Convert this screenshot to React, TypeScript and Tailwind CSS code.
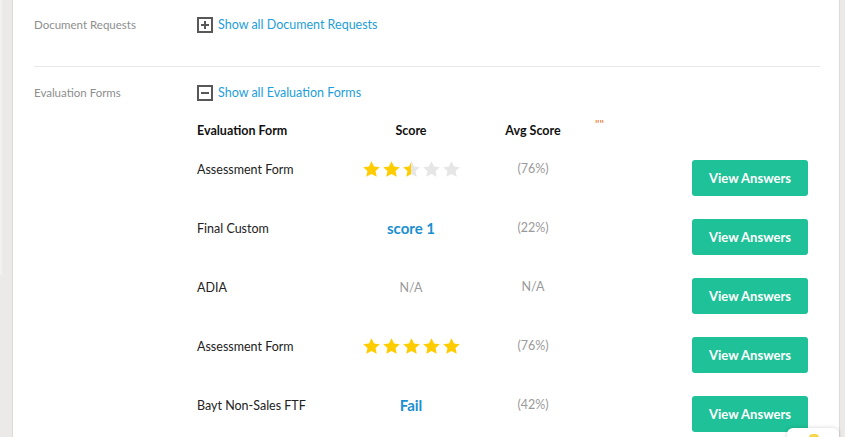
import React from "react";

type Row = {
  form: string;
  score: { kind: "stars"; value: number } | { kind: "text"; text: string } | { kind: "na" };
  avg: string;
};

const rows: Row[] = [
  { form: "Assessment Form", score: { kind: "stars", value: 2.5 }, avg: "(76%)" },
  { form: "Final Custom", score: { kind: "text", text: "score 1" }, avg: "(22%)" },
  { form: "ADIA", score: { kind: "na" }, avg: "N/A" },
  { form: "Assessment Form", score: { kind: "stars", value: 5 }, avg: "(76%)" },
  { form: "Bayt Non-Sales FTF", score: { kind: "text", text: "Fail" }, avg: "(42%)" },
];

const STAR = "M12 1.5l3.2 6.7 7.3.8-5.4 5 1.5 7.3L12 17.6l-6.6 3.7 1.5-7.3L1.5 9l7.3-.8z";

function Star({ fill, id }: { fill: number; id: string }) {
  return (
    <svg width="19" height="19" viewBox="0 0 24 24" className="block">
      <defs>
        <linearGradient id={id}>
          <stop offset={`${fill * 100}%`} stopColor="#ffcc00" />
          <stop offset={`${fill * 100}%`} stopColor="#e6e6e6" />
        </linearGradient>
      </defs>
      <path d={STAR} fill={`url(#${id})`} />
    </svg>
  );
}

function Stars({ value, rowIdx }: { value: number; rowIdx: number }) {
  return (
    <div className="flex gap-[1px]">
      {[0, 1, 2, 3, 4].map((i) => (
        <Star key={i} id={`s${rowIdx}-${i}`} fill={Math.max(0, Math.min(1, value - i))} />
      ))}
    </div>
  );
}

function BoxIcon({ plus }: { plus?: boolean }) {
  return (
    <svg width="16" height="16" viewBox="0 0 16 16" className="block shrink-0">
      <rect x="1" y="1" width="14" height="14" fill="none" stroke="#585858" strokeWidth="2" />
      <rect x="4" y="7" width="8" height="2" fill="#585858" />
      {plus && <rect x="7" y="4" width="2" height="8" fill="#585858" />}
    </svg>
  );
}

export default function App() {
  return (
    <div
      className="relative flex h-[437px] w-[845px] overflow-hidden bg-[#ebeae8]"
      style={{ fontFamily: "Lato, 'Liberation Sans', sans-serif" }}
    >
      {/* left rail */}
      <div className="relative w-[13px] shrink-0 border-r border-[#dcdbd9]">
        <div className="absolute left-0 top-0 h-[275px] w-[2px] bg-[#f2f1ef]" />
      </div>

      {/* main panel */}
      <main className="flex-1 bg-white pl-[21px] pr-[19px]">
        {/* Document Requests */}
        <section className="flex h-[67px] border-b border-[#e9e9e9] pt-[16px]">
          <div className="w-[163px] text-[11.5px] leading-[18px] text-[#8e8e8e]">Document Requests</div>
          <a className="flex h-[18px] items-center gap-[5px] text-[12.5px] text-[#1d9ed8]">
            <BoxIcon plus />
            <span>Show all Document Requests</span>
          </a>
        </section>

        {/* Evaluation Forms */}
        <section className="flex pt-[17px]">
          <div className="w-[163px] text-[11.5px] leading-[18px] text-[#8e8e8e]">Evaluation Forms</div>
          <div className="flex-1">
            <a className="flex h-[18px] items-center gap-[5px] text-[12.5px] text-[#1d9ed8]">
              <BoxIcon />
              <span>Show all Evaluation Forms</span>
            </a>

            <div className="mt-[20px] flex h-[38px] items-start text-[12.5px] font-bold leading-[18px] text-[#111]">
              <div className="w-[164px]">Evaluation Form</div>
              <div className="w-[100px] text-center">Score</div>
              <div className="relative w-[144px] text-center">
                Avg Score
                <span className="absolute left-[134px] top-[-4px] text-[12px] font-normal leading-none text-[#e8742a]">""</span>
              </div>
            </div>

            {rows.map((r, idx) => (
              <div key={idx} className="flex h-[59px] items-start text-[12.5px] leading-[18px]">
                <div className="w-[164px] pt-[1px] text-[#222]">{r.form}</div>
                <div className="flex w-[100px] justify-center">
                  {r.score.kind === "stars" && <Stars value={r.score.value} rowIdx={idx} />}
                  {r.score.kind === "text" && (
                    <span className="text-[15px] font-bold text-[#1b8fcf]">{r.score.text}</span>
                  )}
                  {r.score.kind === "na" && <span className="pt-[1px] text-[#9a9a9a]">N/A</span>}
                </div>
                <div className="w-[144px] text-center text-[#9a9a9a]">{r.avg}</div>
                <div className="flex flex-1 justify-end pr-[12px]">
                  <button className="h-[36px] w-[116px] rounded-[3px] bg-[#1fc198] text-[13px] font-bold text-white">
                    View Answers
                  </button>
                </div>
              </div>
            ))}
          </div>
        </section>
      </main>

      {/* right rail */}
      <div className="w-[6px] shrink-0 border-l border-[#dcdbd9]" />

      {/* floating widget peeking in */}
      <div className="absolute left-[787px] top-[428px] h-[30px] w-[52px] rounded-[6px] bg-white shadow-[0_0_4px_rgba(0,0,0,0.18)]">
        <div className="absolute left-[22px] top-[6px] h-[4px] w-[10px] rounded-t-full bg-[#f5d64a]" />
      </div>
    </div>
  );
}
